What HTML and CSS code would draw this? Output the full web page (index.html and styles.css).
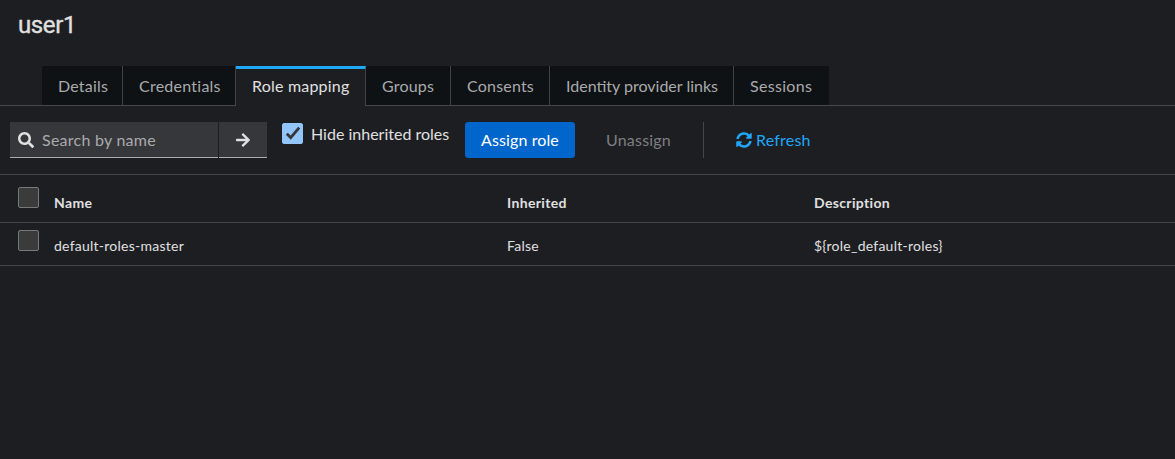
FILE: index.html
```html
<!DOCTYPE html>
<html lang="en">
<head>
<meta charset="utf-8">
<title>user1</title>
<link rel="stylesheet" href="styles.css">
</head>
<body>
<h1 class="title">user1</h1>
<nav class="tabs">
  <a class="tab details">Details</a>
  <a class="tab credentials">Credentials</a>
  <a class="tab mapping active">Role mapping</a>
  <a class="tab groups">Groups</a>
  <a class="tab consents">Consents</a>
  <a class="tab links">Identity provider links</a>
  <a class="tab sessions">Sessions</a>
</nav>
<div class="toolbar">
  <div class="search">
    <div class="field">
      <svg class="icon" viewBox="0 0 512 512"><path d="M505 442.700L405.300 343c-4.500-4.500-10.600-7-17-7H372c27.600-35.300 44-79.700 44-128C416 93.100 322.900 0 208 0S0 93.100 0 208s93.100 208 208 208c48.300 0 92.700-16.400 128-44v16.300c0 6.400 2.500 12.500 7 17l99.700 99.700c9.400 9.400 24.600 9.400 33.900 0l28.300-28.300c9.400-9.400 9.400-24.600.1-34zM208 336c-70.700 0-128-57.200-128-128 0-70.700 57.200-128 128-128 70.700 0 128 57.200 128 128 0 70.700-57.200 128-128 128z"/></svg>
      <span class="placeholder">Search by name</span>
    </div>
    <button class="go" aria-label="Search"><svg viewBox="0 0 448 512"><path d="M190.500 66.900l22.200-22.200c9.400-9.400 24.600-9.400 33.900 0L441 239c9.400 9.400 9.400 24.600 0 33.900L246.600 467.300c-9.400 9.400-24.600 9.400-33.900 0l-22.200-22.200c-9.500-9.500-9.300-25 .4-34.300L311.400 296H24c-13.300 0-24-10.700-24-24v-32c0-13.300 10.700-24 24-24h287.400L190.900 101.200c-9.800-9.300-10-24.800-.4-34.300z"/></svg></button>
  </div>
  <label class="hide"><span class="box checked"><svg viewBox="0 0 16 16"><path d="M1.800 8.800 5.700 12.600 14.200 2.600"/></svg></span><span class="hide-text">Hide inherited roles</span></label>
  <button class="assign">Assign role</button>
  <button class="unassign">Unassign</button>
  <span class="divider"></span>
  <a class="refresh"><svg class="icon" viewBox="0 0 512 512"><path d="M370.720 133.280C339.458 104.008 298.888 87.962 255.848 88c-77.458.068-144.328 53.178-162.791 126.850-1.344 5.363-6.122 9.150-11.651 9.150H24.103c-7.498 0-13.194-6.807-11.807-14.176C33.933 94.924 134.813 8 256 8c66.448 0 126.791 26.136 171.315 68.685L463.030 40.970C478.149 25.851 504 36.559 504 57.941V192c0 13.255-10.745 24-24 24H345.941c-21.382 0-32.090-25.851-16.971-40.971l41.750-41.749zM32 296h134.059c21.382 0 32.090 25.851 16.971 40.971l-41.750 41.750c31.262 29.273 71.835 45.319 114.876 45.280 77.418-.07 144.315-53.144 162.787-126.849 1.344-5.363 6.122-9.150 11.651-9.150h57.304c7.498 0 13.194 6.807 11.807 14.176C478.067 417.076 377.187 504 256 504c-66.448 0-126.791-26.136-171.315-68.685L48.970 471.030C33.851 486.149 8 475.441 8 454.059V320c0-13.255 10.745-24 24-24z"/></svg><span>Refresh</span></a>
</div>
<div class="table">
  <div class="row head"><span class="box"></span><b class="name">Name</b><b class="inherited">Inherited</b><b class="desc">Description</b></div>
  <div class="row"><span class="box"></span><span class="name">default-roles-master</span><span class="inherited">False</span><span class="desc">${role_default-roles}</span></div>
</div>
</body>
</html>
```
FILE: styles.css
```css
* { box-sizing: border-box; }
body { margin: 0; height: 459px; overflow: hidden; background: #1d1e22; color: #e0e0e0; font: 16px/24px Lato, sans-serif; display: flex; flex-direction: column; }
button { border: 0; padding: 0; font: inherit; background: none; }
svg { display: block; fill: currentColor; }
.title { margin: 0; height: 66px; padding: 10px 0 0 18px; font: 400 24px/31px Roboto, sans-serif; letter-spacing: -.4px; -webkit-text-stroke: .35px #e0e0e0; }
.tabs { display: flex; height: 40px; padding-left: 42px; background: linear-gradient(#47484b, #47484b) left bottom / 100% 1px no-repeat; }
.tab { height: 39px; padding: 8px 0 0 16px; background: #0f1214; border-right: 1px solid #414245; color: #a9aaac; white-space: nowrap; letter-spacing: .2px; }
.details { width: 81px; }
.credentials { width: 113px; letter-spacing: .25px; }
.mapping { width: 130px; }
.groups { width: 85px; }
.consents { width: 99px; }
.links { width: 184px; letter-spacing: 0; }
.sessions { width: 95px; letter-spacing: .3px; border-right: 0; }
.tab.active { height: 40px; padding-top: 5px; border-top: 3px solid #1fa7f8; background: #1d1e22; color: #e0e0e0; }
.toolbar { display: flex; height: 69px; padding: 16px 0 0 10px; border-bottom: 1px solid #444548; }
.search { display: flex; width: 257px; height: 36px; gap: 1px; }
.field { width: 208px; height: 36px; display: flex; align-items: center; padding-left: 8px; gap: 8px; background: #36373a; border-bottom: 1px solid #aaabac; }
.icon { width: 16px; height: 16px; flex: none; }
.placeholder { color: #a9aaac; letter-spacing: .25px; }
.go { flex: 1; height: 36px; display: flex; align-items: center; justify-content: center; background: #36373a; color: #e0e0e0; border-bottom: 1px solid #aaabac; }
.go svg { width: 14px; height: 16px; }
.hide { display: flex; margin-left: 15px; width: 183px; height: 24px; gap: 8px; white-space: nowrap; }
.box { width: 21px; height: 21px; flex: none; border: 1px solid #77787a; border-radius: 2px; background: #3b3b3b; }
.checked { margin-top: 1px; background: #92c5f9; border-color: #92c5f9; }
.checked svg { width: 16px; height: 16px; margin: 1px 0 0 2px; fill: none; stroke: #36373a; stroke-width: 2.8; }
.hide-text { letter-spacing: 0; }
.assign { width: 110px; height: 36px; border-radius: 3px; background: #06c; color: #fff; letter-spacing: .1px; }
.unassign { width: 97px; height: 36px; margin-left: 15px; color: #7d7e81; letter-spacing: .2px; }
.divider { width: 1px; height: 36px; margin-left: 16px; background: #444548; }
.refresh { display: flex; height: 36px; align-items: center; margin-left: 32px; gap: 4px; color: #1fa7f8; letter-spacing: .2px; }
.row { display: grid; grid-template-columns: 36px 453px 307px 1fr; height: 43px; padding: 7px 0 0 18px; border-bottom: 1px solid #444548; font-size: 14px; line-height: 21px; }
.row > :not(.box) { padding-top: 5px; letter-spacing: .25px; }
.row.head { height: 48px; padding-top: 12px; }
.head > b:not(.box) { padding-top: 5px; letter-spacing: .35px; }
```
